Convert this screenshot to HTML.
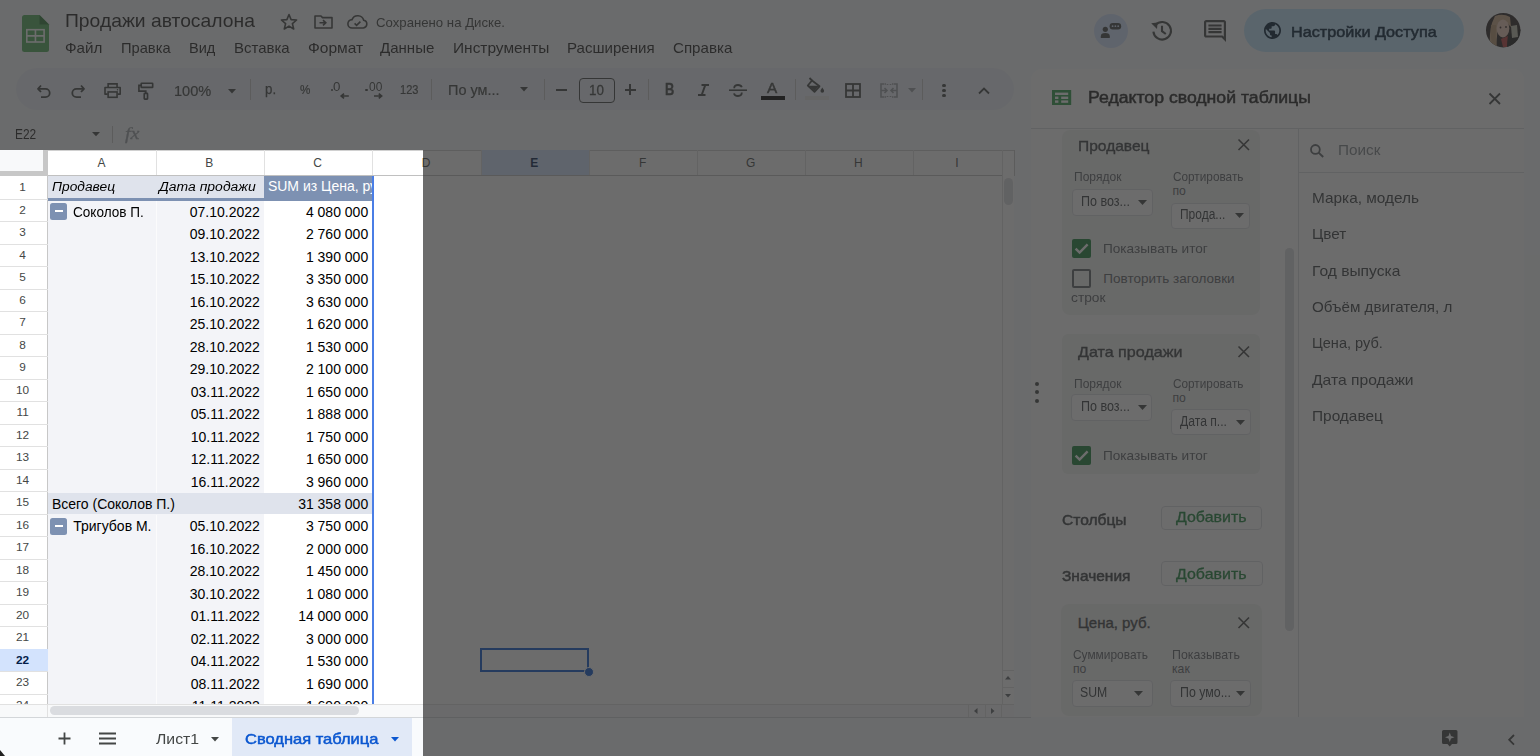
<!DOCTYPE html>
<html><head><meta charset="utf-8"><title>Sheets</title>
<style>
*{margin:0;padding:0;box-sizing:border-box}
html,body{width:1540px;height:756px;overflow:hidden;background:#f9fbfd;font-family:"Liberation Sans",sans-serif;position:relative}
.a{position:absolute}
.t{position:absolute;white-space:nowrap;line-height:normal;transform-origin:0 0}
svg.a{overflow:visible}
</style></head><body>
<svg class="a" style="left:22px;top:15px;" width="27" height="37" viewBox="0 0 27 37"><path d="M0 2.5 Q0 0 2.5 0 H17.5 L27 9.5 V34.5 Q27 37 24.5 37 H2.5 Q0 37 0 34.5 Z" fill="#4fae5c"/>
<path d="M17.5 0 V9.5 H27 Z" fill="#2f7a3a"/>
<rect x="4.8" y="14.7" width="17.3" height="12.3" fill="none" stroke="#fff" stroke-width="1.6"/>
<path d="M4.8 20.85 H22.1 M13.45 14.7 V27" stroke="#fff" stroke-width="1.6"/></svg>
<div class="t" style="left:65.00px;top:10.73px;font-size:18.2px;color:#1f1f1f;transform:scaleX(1.0611);">Продажи автосалона</div>
<svg class="a" style="left:280px;top:13px;" width="18" height="17" viewBox="0 0 18 17"><path d="M9 1.5 L11.1 6.6 L16.6 7 L12.4 10.6 L13.7 16 L9 13.1 L4.3 16 L5.6 10.6 L1.4 7 L6.9 6.6 Z" fill="none" stroke="#444746" stroke-width="1.6" stroke-linejoin="round"/></svg>
<svg class="a" style="left:314px;top:15px;" width="19" height="14" viewBox="0 0 19 14"><path d="M1 1 H7 L8.5 2.6 H18 V13 H1 Z" fill="none" stroke="#444746" stroke-width="1.6" stroke-linejoin="round"/><path d="M5.5 7.8 H11.5 M9 5.2 L11.8 7.8 L9 10.4" fill="none" stroke="#444746" stroke-width="1.6"/></svg>
<svg class="a" style="left:347px;top:15px;" width="21" height="14" viewBox="0 0 21 14"><path d="M5.2 13 H16.3 A3.9 3.9 0 0 0 16.7 5.3 A6.2 6.2 0 0 0 5 4.6 A4.2 4.2 0 0 0 5.2 13 Z" fill="none" stroke="#444746" stroke-width="1.6"/><path d="M7.6 8.4 L9.6 10.3 L13.4 6.6" fill="none" stroke="#444746" stroke-width="1.6"/></svg>
<div class="t" style="left:376.30px;top:15.86px;font-size:12.2px;color:#444746;transform:scaleX(1.0821);">Сохранено на Диске.</div>
<div class="t" style="left:65.40px;top:40.22px;font-size:13.9px;color:#1f1f1f;transform:scaleX(1.0944);">Файл</div>
<div class="t" style="left:121.40px;top:40.22px;font-size:13.9px;color:#1f1f1f;transform:scaleX(1.0564);">Правка</div>
<div class="t" style="left:189.30px;top:40.22px;font-size:13.9px;color:#1f1f1f;transform:scaleX(1.0458);">Вид</div>
<div class="t" style="left:233.80px;top:40.22px;font-size:13.9px;color:#1f1f1f;transform:scaleX(1.0781);">Вставка</div>
<div class="t" style="left:307.70px;top:40.22px;font-size:13.9px;color:#1f1f1f;transform:scaleX(1.1179);">Формат</div>
<div class="t" style="left:380.40px;top:40.22px;font-size:13.9px;color:#1f1f1f;transform:scaleX(1.0833);">Данные</div>
<div class="t" style="left:452.70px;top:40.22px;font-size:13.9px;color:#1f1f1f;transform:scaleX(1.1122);">Инструменты</div>
<div class="t" style="left:567.00px;top:40.22px;font-size:13.9px;color:#1f1f1f;transform:scaleX(1.0849);">Расширения</div>
<div class="t" style="left:672.80px;top:40.22px;font-size:13.9px;color:#1f1f1f;transform:scaleX(1.0893);">Справка</div>
<div class="a" style="left:1094px;top:13.5px;width:34px;height:34px;border-radius:50%;background:#d3e3fd"></div>
<svg class="a" style="left:1100px;top:22px;" width="23" height="17" viewBox="0 0 23 17"><circle cx="5.3" cy="7.3" r="2.6" fill="#444746"/><path d="M0.8 16 V14.2 Q0.8 10.9 5.3 10.9 Q9.8 10.9 9.8 14.2 V16 Z" fill="#444746"/><rect x="9.6" y="1" width="11.6" height="6.4" rx="3.2" fill="#444746"/><circle cx="12.6" cy="4.2" r="0.9" fill="#d3e3fd"/><circle cx="15.4" cy="4.2" r="0.9" fill="#d3e3fd"/><circle cx="18.2" cy="4.2" r="0.9" fill="#d3e3fd"/></svg>
<svg class="a" style="left:1150px;top:19px;" width="23" height="23" viewBox="0 0 23 23"><path d="M3.4 12.6 A8.8 8.8 0 1 0 5.6 5.9" fill="none" stroke="#444746" stroke-width="2.1"/><path d="M1.2 4.3 L7.6 3.6 L7 10 Z" fill="#444746"/><path d="M12 6.8 V12.2 L15.8 15" fill="none" stroke="#444746" stroke-width="2.1"/></svg>
<svg class="a" style="left:1203.5px;top:19.5px;" width="22" height="22" viewBox="2 2 20 20"><path d="M21.99 4c0-1.1-.89-2-1.99-2H4c-1.1 0-2 .9-2 2v12c0 1.1.9 2 2 2h14l4 4-.01-18zM20 4v13.17L18.83 16H4V4h16zM6 12h12v2H6zm0-3h12v2H6zm0-3h12v2H6z" fill="#444746"/></svg>
<div class="a" style="left:1244px;top:9px;width:220px;height:43px;border-radius:22px;background:#c2e7ff"></div>
<svg class="a" style="left:1263.6px;top:22px;" width="17" height="17" viewBox="2 2 20 20"><path d="M12 2C6.48 2 2 6.48 2 12s4.48 10 10 10 10-4.48 10-10S17.52 2 12 2zm-1 17.93c-3.95-.49-7-3.85-7-7.93 0-.62.08-1.21.21-1.79L9 15v1c0 1.1.9 2 2 2v1.93zm6.9-2.54c-.26-.81-1-1.39-1.9-1.39h-1v-3c0-.55-.45-1-1-1H8v-2h2c.55 0 1-.45 1-1V7h2c1.1 0 2-.9 2-2v-.41c2.93 1.19 5 4.06 5 7.41 0 2.08-.8 3.97-2.1 5.39z" fill="#001d35"/></svg>
<div class="t" style="left:1290.60px;top:22.84px;font-size:15.2px;color:#001d35;-webkit-text-stroke:0.55px #001d35;transform:scaleX(1.0666);">Настройки Доступа</div>
<svg class="a" style="left:1485.6px;top:13px;" width="34.4" height="34.4" viewBox="0 0 34.4 34.4"><defs><clipPath id="av"><circle cx="17.2" cy="17.2" r="17.2"/></clipPath><filter id="bl"><feGaussianBlur stdDeviation="0.7"/></filter></defs><g clip-path="url(#av)"><rect width="35" height="35" fill="#2a2424"/><g filter="url(#bl)"><path d="M9 3 Q17 0 24 4 L25 14 L20 9 Q15 7 12 12 L10 35 L4 35 Q3 20 6 10 Z" fill="#c9a684"/><path d="M5 12 Q4 25 7 35 L11 35 Q9 24 10 12 Z" fill="#b8956e"/><ellipse cx="17" cy="15.5" rx="6.3" ry="9" fill="#e9c8b6"/><path d="M15 26 L22 23 L21 34 L17 34 Z" fill="#b83a3a"/><path d="M22 22 L35 16 L35 35 L21 35 Z" fill="#1e1a1a"/><path d="M25 13 L31 12 L32 24 L26 25 Z" fill="#bfbfae"/><circle cx="14.5" cy="14.5" r="0.9" fill="#3a2a2a"/><circle cx="20" cy="14" r="0.9" fill="#3a2a2a"/></g></g></svg>
<div class="a" style="left:16px;top:68px;width:998px;height:42px;border-radius:21px;background:#edf2fa"></div>
<svg class="a" style="left:37px;top:84px;" width="14" height="14" viewBox="0 0 14 14"><path d="M4 1.5 L1 4.8 L4 8" fill="none" stroke="#444746" stroke-width="1.8" stroke-linejoin="round"/><path d="M1.5 4.8 H8.5 A4.2 4.2 0 0 1 8.5 13.2 H4" fill="none" stroke="#444746" stroke-width="1.8"/></svg>
<svg class="a" style="left:71px;top:84px;" width="14" height="14" viewBox="0 0 14 14"><path d="M10 1.5 L13 4.8 L10 8" fill="none" stroke="#444746" stroke-width="1.8" stroke-linejoin="round"/><path d="M12.5 4.8 H5.5 A4.2 4.2 0 0 0 5.5 13.2 H10" fill="none" stroke="#444746" stroke-width="1.8"/></svg>
<svg class="a" style="left:103.9px;top:83px;" width="17.2" height="15.2" viewBox="0 0 19 17"><path d="M4.5 5 V1 H14.5 V5" fill="none" stroke="#444746" stroke-width="1.8"/><path d="M4 12.5 H1 V5 H18 V12.5 H15" fill="none" stroke="#444746" stroke-width="1.8" stroke-linejoin="round"/><rect x="4.5" y="10" width="10" height="6" fill="none" stroke="#444746" stroke-width="1.8"/><circle cx="15" cy="7.6" r="0.8" fill="#444746"/></svg>
<svg class="a" style="left:137.8px;top:81.8px;" width="15.6" height="18.2" viewBox="0 0 17 19"><rect x="3.5" y="1" width="12.5" height="4.5" rx="0.5" fill="none" stroke="#444746" stroke-width="1.8"/><path d="M3.5 3.2 H1 V9.5 H8.5 V12" fill="none" stroke="#444746" stroke-width="1.8"/><rect x="6.8" y="12" width="3.6" height="6.3" rx="0.6" fill="none" stroke="#444746" stroke-width="1.8"/></svg>
<div class="t" style="left:174.00px;top:83.28px;font-size:14.5px;color:#444746;-webkit-text-stroke:0.2px #444746;transform:scaleX(1.0058);">100%</div>
<svg class="a" style="left:227.5px;top:89.25px;" width="8" height="4.5" viewBox="0 0 8 4.5"><path d="M0 0 H8 L4.0 4.5 Z" fill="#444746"/></svg>
<div class="a" style="left:249.8px;top:79px;width:1px;height:21px;background:#c7c7c7;"></div>
<div class="t" style="left:265.20px;top:80.98px;font-size:14.5px;color:#444746;-webkit-text-stroke:0.25px #444746;transform:scaleX(0.9179);">р.</div>
<div class="t" style="left:299.80px;top:81.96px;font-size:13.3px;color:#444746;-webkit-text-stroke:0.2px #444746;transform:scaleX(0.8795);">%</div>
<div class="a" style="left:330.8px;top:88.8px;width:2.6px;height:2.6px;background:#444746;border-radius:50%;"></div>
<div class="t" style="left:333.40px;top:80.44px;font-size:12px;color:#444746;transform:scaleX(1.1088);">0</div>
<svg class="a" style="left:339.5px;top:93px;" width="9" height="6" viewBox="0 0 9 6"><path d="M8.8 3 H1.5 M4 0.6 L1.2 3 L4 5.4" fill="none" stroke="#444746" stroke-width="1.7"/></svg>
<div class="a" style="left:365px;top:88.8px;width:2.6px;height:2.6px;background:#444746;border-radius:50%;"></div>
<div class="t" style="left:368.80px;top:80.44px;font-size:12px;color:#444746;transform:scaleX(0.9964);">00</div>
<svg class="a" style="left:373.6px;top:93px;" width="9" height="6" viewBox="0 0 9 6"><path d="M0 3 H7.3 M4.8 0.6 L7.6 3 L4.8 5.4" fill="none" stroke="#444746" stroke-width="1.7"/></svg>
<div class="t" style="left:399.60px;top:82.88px;font-size:12.4px;color:#444746;-webkit-text-stroke:0.2px #444746;transform:scaleX(0.8893);">123</div>
<div class="a" style="left:431.1px;top:79px;width:1px;height:21px;background:#c7c7c7;"></div>
<div class="t" style="left:448.30px;top:81.12px;font-size:15px;color:#444746;-webkit-text-stroke:0.2px #444746;transform:scaleX(0.9638);">По ум...</div>
<svg class="a" style="left:519.7px;top:87.05px;" width="8" height="4.5" viewBox="0 0 8 4.5"><path d="M0 0 H8 L4.0 4.5 Z" fill="#444746"/></svg>
<div class="a" style="left:544.1px;top:79px;width:1px;height:21px;background:#c7c7c7;"></div>
<div class="a" style="left:556.2px;top:89px;width:10.6px;height:1.8px;background:#444746;"></div>
<div class="a" style="left:578.5px;top:77.5px;width:36px;height:25px;border:1px solid #444746;border-radius:4px"></div>
<div class="t" style="left:588.70px;top:81.91px;font-size:14.8px;color:#444746;-webkit-text-stroke:0.3px #444746;transform:scaleX(0.9051);">10</div>
<div class="a" style="left:624.7px;top:89px;width:11.1px;height:1.8px;background:#444746;"></div>
<div class="a" style="left:629.35px;top:84.4px;width:1.8px;height:11px;background:#444746;"></div>
<div class="a" style="left:647.9px;top:79px;width:1px;height:21px;background:#c7c7c7;"></div>
<div class="t" style="left:664.70px;top:81.32px;font-size:16px;color:#444746;font-weight:bold;-webkit-text-stroke:0.3px #444746;transform:scaleX(0.8048);">B</div>
<svg class="a" style="left:697px;top:84px;" width="13" height="12" viewBox="0 0 13 12"><path d="M4.5 1 H12 M1 11 H8.5 M8.3 1 L4.7 11" fill="none" stroke="#444746" stroke-width="2"/></svg>
<svg class="a" style="left:729px;top:84px;" width="18" height="13" viewBox="0 0 18 13"><path d="M0 6.2 H18" stroke="#444746" stroke-width="1.6"/><path d="M5.2 4.2 Q5.2 1 9 1 Q12 1 12.8 3.2 M12.8 8.6 Q12.8 12 9 12 Q5.5 12 5 9.3" fill="none" stroke="#444746" stroke-width="1.8"/></svg>
<div class="t" style="left:767.40px;top:80.13px;font-size:14px;color:#444746;-webkit-text-stroke:0.45px #444746;transform:scaleX(1.0923);">A</div>
<div class="a" style="left:761.1px;top:95.8px;width:24.4px;height:4px;background:#000;"></div>
<div class="a" style="left:794.9px;top:79px;width:1px;height:21px;background:#c7c7c7;"></div>
<svg class="a" style="left:806px;top:77px;" width="20" height="17" viewBox="0 0 20 17"><path d="M3.5 1 L6 3.5" stroke="#444746" stroke-width="1.8"/><path d="M6 3.5 L13.5 9.3 L8.5 14.8 L1.8 8.5 Z" fill="none" stroke="#444746" stroke-width="1.8" stroke-linejoin="round"/><path d="M2.8 8.8 H13 L8.5 14 Z" fill="#444746"/><path d="M16.3 10.5 Q14.5 13 14.5 14 A1.8 1.8 0 0 0 18.1 14 Q18.1 13 16.3 10.5 Z" fill="#444746"/></svg>
<div class="a" style="left:805.2px;top:95.8px;width:24.3px;height:4.3px;background:#e8e8e8;"></div>
<svg class="a" style="left:845px;top:83px;" width="16" height="15" viewBox="0 0 16 15"><rect x="1" y="1" width="14" height="13" fill="none" stroke="#444746" stroke-width="1.8"/><path d="M8 1 V14 M1 7.5 H15" stroke="#444746" stroke-width="1.8"/></svg>
<svg class="a" style="left:880px;top:83px;" width="18" height="15" viewBox="0 0 18 15"><path d="M4 1 H1 V14 H4 M14 1 H17 V14 H14 M4.5 1 H6 M4.5 14 H6 M12 1 H13.5 M12 14 H13.5 M7.5 1 V2 M7.5 13 V14 M10.5 1 V2 M10.5 13 V14" fill="none" stroke="#9aa0a6" stroke-width="1.6"/><path d="M1 7.5 H7 M4.5 5 L7 7.5 L4.5 10 M17 7.5 H11 M13.5 5 L11 7.5 L13.5 10" fill="none" stroke="#9aa0a6" stroke-width="1.6"/></svg>
<svg class="a" style="left:907.5px;top:87.95px;" width="8" height="4.5" viewBox="0 0 8 4.5"><path d="M0 0 H8 L4.0 4.5 Z" fill="#9aa0a6"/></svg>
<div class="a" style="left:922.0px;top:79px;width:1px;height:21px;background:#c7c7c7;"></div>
<div class="a" style="left:942.3px;top:83.8px;width:3.4px;height:3.4px;border-radius:50%;background:#444746"></div>
<div class="a" style="left:942.3px;top:88.7px;width:3.4px;height:3.4px;border-radius:50%;background:#444746"></div>
<div class="a" style="left:942.3px;top:93.6px;width:3.4px;height:3.4px;border-radius:50%;background:#444746"></div>
<svg class="a" style="left:978px;top:87px;" width="12" height="7.5" viewBox="0 0 12 7.5"><path d="M1 6.5 L6 1.5 L11 6.5" fill="none" stroke="#444746" stroke-width="1.8"/></svg>
<div class="t" style="left:14.50px;top:126.23px;font-size:14px;color:#1f1f1f;transform:scaleX(0.8510);">E22</div>
<svg class="a" style="left:91.5px;top:132.1px;" width="8" height="4.2" viewBox="0 0 8 4.2"><path d="M0 0 H8 L4.0 4.2 Z" fill="#444746"/></svg>
<div class="a" style="left:112.2px;top:126px;width:1px;height:17px;background:#c7c7c7;"></div>
<div class="t" style="left:124.8px;top:124px;font-size:16.5px;color:#9aa0a6;font-style:italic;transform:scaleX(1.22);-webkit-text-stroke:0.3px #9aa0a6;font-family:'Liberation Serif',serif">fx</div>
<div class="a" style="left:0px;top:150px;width:1014px;height:554px;background:#ffffff;"></div>
<div class="a" style="left:0px;top:150px;width:48px;height:25px;background:#f8f9fa;"></div>
<div class="a" style="left:48px;top:150px;width:966px;height:1px;background:#d0d0d0;"></div>
<div class="a" style="left:43px;top:150px;width:4.5px;height:25px;background:#c7c7c7;"></div>
<div class="a" style="left:0px;top:171px;width:47.5px;height:4.5px;background:#c7c7c7;"></div>
<div class="a" style="left:47px;top:150px;width:1px;height:554px;background:#c7c7c7;"></div>
<div class="a" style="left:48px;top:175px;width:966px;height:1px;background:#c0c0c0;"></div>
<div class="a" style="left:481px;top:150px;width:107.5px;height:25px;background:#d3e3fd;"></div>
<div class="a" style="left:155.5px;top:150px;width:1px;height:25px;background:#e1e1e1;"></div>
<div class="a" style="left:263.5px;top:150px;width:1px;height:25px;background:#e1e1e1;"></div>
<div class="a" style="left:372px;top:150px;width:1px;height:25px;background:#e1e1e1;"></div>
<div class="a" style="left:480.5px;top:150px;width:1px;height:25px;background:#e1e1e1;"></div>
<div class="a" style="left:588.5px;top:150px;width:1px;height:25px;background:#e1e1e1;"></div>
<div class="a" style="left:697px;top:150px;width:1px;height:25px;background:#e1e1e1;"></div>
<div class="a" style="left:804.5px;top:150px;width:1px;height:25px;background:#e1e1e1;"></div>
<div class="a" style="left:912.5px;top:150px;width:1px;height:25px;background:#e1e1e1;"></div>
<div class="a" style="left:1001.5px;top:150px;width:1px;height:25px;background:#e1e1e1;"></div>
<div class="t" style="left:97.55px;top:155.64px;font-size:12px;color:#444746;">A</div>
<div class="t" style="left:205.30px;top:155.64px;font-size:12px;color:#444746;">B</div>
<div class="t" style="left:313.22px;top:155.64px;font-size:12px;color:#444746;">C</div>
<div class="t" style="left:421.72px;top:155.64px;font-size:12px;color:#444746;">D</div>
<div class="t" style="left:530.30px;top:155.64px;font-size:12px;color:#041e49;font-weight:bold;">E</div>
<div class="t" style="left:638.88px;top:155.64px;font-size:12px;color:#444746;">F</div>
<div class="t" style="left:745.88px;top:155.64px;font-size:12px;color:#444746;">G</div>
<div class="t" style="left:853.97px;top:155.64px;font-size:12px;color:#444746;">H</div>
<div class="t" style="left:955.13px;top:155.64px;font-size:12px;color:#444746;">I</div>
<div class="a" style="left:0px;top:198.9px;width:47.5px;height:1px;background:#e1e1e1;"></div>
<div class="t" style="left:19.32px;top:179.62px;font-size:11.8px;color:#444746;">1</div>
<div class="a" style="left:0px;top:221.39000000000001px;width:47.5px;height:1px;background:#e1e1e1;"></div>
<div class="t" style="left:19.32px;top:202.82px;font-size:11.8px;color:#444746;">2</div>
<div class="a" style="left:0px;top:243.88000000000002px;width:47.5px;height:1px;background:#e1e1e1;"></div>
<div class="t" style="left:19.32px;top:225.31px;font-size:11.8px;color:#444746;">3</div>
<div class="a" style="left:0px;top:266.37px;width:47.5px;height:1px;background:#e1e1e1;"></div>
<div class="t" style="left:19.32px;top:247.80px;font-size:11.8px;color:#444746;">4</div>
<div class="a" style="left:0px;top:288.86px;width:47.5px;height:1px;background:#e1e1e1;"></div>
<div class="t" style="left:19.32px;top:270.29px;font-size:11.8px;color:#444746;">5</div>
<div class="a" style="left:0px;top:311.35px;width:47.5px;height:1px;background:#e1e1e1;"></div>
<div class="t" style="left:19.32px;top:292.78px;font-size:11.8px;color:#444746;">6</div>
<div class="a" style="left:0px;top:333.84000000000003px;width:47.5px;height:1px;background:#e1e1e1;"></div>
<div class="t" style="left:19.32px;top:315.27px;font-size:11.8px;color:#444746;">7</div>
<div class="a" style="left:0px;top:356.33000000000004px;width:47.5px;height:1px;background:#e1e1e1;"></div>
<div class="t" style="left:19.32px;top:337.76px;font-size:11.8px;color:#444746;">8</div>
<div class="a" style="left:0px;top:378.82px;width:47.5px;height:1px;background:#e1e1e1;"></div>
<div class="t" style="left:19.32px;top:360.25px;font-size:11.8px;color:#444746;">9</div>
<div class="a" style="left:0px;top:401.31px;width:47.5px;height:1px;background:#e1e1e1;"></div>
<div class="t" style="left:16.04px;top:382.74px;font-size:11.8px;color:#444746;">10</div>
<div class="a" style="left:0px;top:423.8px;width:47.5px;height:1px;background:#e1e1e1;"></div>
<div class="t" style="left:16.48px;top:405.23px;font-size:11.8px;color:#444746;">11</div>
<div class="a" style="left:0px;top:446.28999999999996px;width:47.5px;height:1px;background:#e1e1e1;"></div>
<div class="t" style="left:16.04px;top:427.72px;font-size:11.8px;color:#444746;">12</div>
<div class="a" style="left:0px;top:468.78px;width:47.5px;height:1px;background:#e1e1e1;"></div>
<div class="t" style="left:16.04px;top:450.21px;font-size:11.8px;color:#444746;">13</div>
<div class="a" style="left:0px;top:491.27px;width:47.5px;height:1px;background:#e1e1e1;"></div>
<div class="t" style="left:16.04px;top:472.70px;font-size:11.8px;color:#444746;">14</div>
<div class="a" style="left:0px;top:513.76px;width:47.5px;height:1px;background:#e1e1e1;"></div>
<div class="t" style="left:16.04px;top:495.19px;font-size:11.8px;color:#444746;">15</div>
<div class="a" style="left:0px;top:536.25px;width:47.5px;height:1px;background:#e1e1e1;"></div>
<div class="t" style="left:16.04px;top:517.68px;font-size:11.8px;color:#444746;">16</div>
<div class="a" style="left:0px;top:558.74px;width:47.5px;height:1px;background:#e1e1e1;"></div>
<div class="t" style="left:16.04px;top:540.17px;font-size:11.8px;color:#444746;">17</div>
<div class="a" style="left:0px;top:581.23px;width:47.5px;height:1px;background:#e1e1e1;"></div>
<div class="t" style="left:16.04px;top:562.66px;font-size:11.8px;color:#444746;">18</div>
<div class="a" style="left:0px;top:603.72px;width:47.5px;height:1px;background:#e1e1e1;"></div>
<div class="t" style="left:16.04px;top:585.15px;font-size:11.8px;color:#444746;">19</div>
<div class="a" style="left:0px;top:626.21px;width:47.5px;height:1px;background:#e1e1e1;"></div>
<div class="t" style="left:16.04px;top:607.64px;font-size:11.8px;color:#444746;">20</div>
<div class="a" style="left:0px;top:648.6999999999999px;width:47.5px;height:1px;background:#e1e1e1;"></div>
<div class="t" style="left:16.04px;top:630.13px;font-size:11.8px;color:#444746;">21</div>
<div class="a" style="left:0px;top:649.1999999999999px;width:47.5px;height:22.49px;background:#d3e3fd;"></div>
<div class="a" style="left:0px;top:671.1899999999999px;width:47.5px;height:1px;background:#e1e1e1;"></div>
<div class="t" style="left:16.04px;top:652.62px;font-size:11.8px;color:#041e49;font-weight:bold;">22</div>
<div class="a" style="left:0px;top:693.68px;width:47.5px;height:1px;background:#e1e1e1;"></div>
<div class="t" style="left:16.04px;top:675.11px;font-size:11.8px;color:#444746;">23</div>
<div class="a" style="left:0px;top:716.17px;width:47.5px;height:1px;background:#e1e1e1;"></div>
<div class="t" style="left:16.04px;top:697.60px;font-size:11.8px;color:#444746;">24</div>
<div class="a" style="left:48px;top:176px;width:215.5px;height:21.5px;background:#dfe3ec;"></div>
<div class="a" style="left:263.5px;top:176px;width:108.5px;height:24.5px;background:#7d91b2;"></div>
<div class="a" style="left:48px;top:197.5px;width:215.5px;height:3px;background:#7d91b2;"></div>
<div class="a" style="left:48px;top:200.5px;width:215.5px;height:503.5px;background:#f3f4f8;"></div>
<div class="a" style="left:263.5px;top:200.5px;width:108.5px;height:503.5px;background:#ffffff;"></div>
<div class="a" style="left:155.5px;top:200.5px;width:1px;height:292px;background:#fbfbfc;"></div>
<div class="a" style="left:155.5px;top:514.8px;width:1px;height:189px;background:#fbfbfc;"></div>
<div class="t" style="left:51.90px;top:178.60px;font-size:13.7px;color:#000;font-style:italic;transform:scaleX(1.0070);">Продавец</div>
<div class="t" style="left:159.10px;top:178.60px;font-size:13.7px;color:#000;font-style:italic;transform:scaleX(1.0193);">Дата продажи</div>
<div class="a" style="left:263.5px;top:176px;width:108.5px;height:24px;overflow:hidden">
<div class="t" style="left:4.40px;top:2.13px;font-size:14px;color:#ffffff;">SUM из Цена, руб.</div>
</div>
<div class="a" style="left:48px;top:492.57px;width:324px;height:21.5px;background:#dfe3ec;"></div>
<div class="a" style="left:0;top:0;width:1540px;height:704px;overflow:hidden">
<div class="t" style="left:189.73px;top:203.63px;font-size:14px;color:#000;">07.10.2022</div>
<div class="t" style="left:305.92px;top:203.63px;font-size:14px;color:#000;">4 080 000</div>
<div class="t" style="left:189.73px;top:226.12px;font-size:14px;color:#000;">09.10.2022</div>
<div class="t" style="left:305.92px;top:226.12px;font-size:14px;color:#000;">2 760 000</div>
<div class="t" style="left:189.73px;top:248.61px;font-size:14px;color:#000;">13.10.2022</div>
<div class="t" style="left:305.92px;top:248.61px;font-size:14px;color:#000;">1 390 000</div>
<div class="t" style="left:189.73px;top:271.10px;font-size:14px;color:#000;">15.10.2022</div>
<div class="t" style="left:305.92px;top:271.10px;font-size:14px;color:#000;">3 350 000</div>
<div class="t" style="left:189.73px;top:293.59px;font-size:14px;color:#000;">16.10.2022</div>
<div class="t" style="left:305.92px;top:293.59px;font-size:14px;color:#000;">3 630 000</div>
<div class="t" style="left:189.73px;top:316.08px;font-size:14px;color:#000;">25.10.2022</div>
<div class="t" style="left:305.92px;top:316.08px;font-size:14px;color:#000;">1 620 000</div>
<div class="t" style="left:189.73px;top:338.57px;font-size:14px;color:#000;">28.10.2022</div>
<div class="t" style="left:305.92px;top:338.57px;font-size:14px;color:#000;">1 530 000</div>
<div class="t" style="left:189.73px;top:361.06px;font-size:14px;color:#000;">29.10.2022</div>
<div class="t" style="left:305.92px;top:361.06px;font-size:14px;color:#000;">2 100 000</div>
<div class="t" style="left:190.77px;top:383.55px;font-size:14px;color:#000;">03.11.2022</div>
<div class="t" style="left:305.92px;top:383.55px;font-size:14px;color:#000;">1 650 000</div>
<div class="t" style="left:190.77px;top:406.04px;font-size:14px;color:#000;">05.11.2022</div>
<div class="t" style="left:305.92px;top:406.04px;font-size:14px;color:#000;">1 888 000</div>
<div class="t" style="left:190.77px;top:428.53px;font-size:14px;color:#000;">10.11.2022</div>
<div class="t" style="left:305.92px;top:428.53px;font-size:14px;color:#000;">1 750 000</div>
<div class="t" style="left:190.77px;top:451.02px;font-size:14px;color:#000;">12.11.2022</div>
<div class="t" style="left:305.92px;top:451.02px;font-size:14px;color:#000;">1 650 000</div>
<div class="t" style="left:190.77px;top:473.51px;font-size:14px;color:#000;">16.11.2022</div>
<div class="t" style="left:305.92px;top:473.51px;font-size:14px;color:#000;">3 960 000</div>
<div class="a" style="left:50.3px;top:202.90px;width:16.8px;height:16.8px;border-radius:2.5px;background:#7d91b2"></div>
<div class="a" style="left:54.7px;top:209.7px;width:8.5px;height:2.6px;background:#fff;"></div>
<div class="t" style="left:73.30px;top:203.63px;font-size:14px;color:#000;transform:scaleX(0.9692);">Соколов П.</div>
<div class="t" style="left:51.90px;top:496.00px;font-size:14px;color:#000;">Всего (Соколов П.)</div>
<div class="t" style="left:298.13px;top:496.00px;font-size:14px;color:#000;">31 358 000</div>
<div class="t" style="left:189.73px;top:518.49px;font-size:14px;color:#000;">05.10.2022</div>
<div class="t" style="left:305.92px;top:518.49px;font-size:14px;color:#000;">3 750 000</div>
<div class="t" style="left:189.73px;top:540.98px;font-size:14px;color:#000;">16.10.2022</div>
<div class="t" style="left:305.92px;top:540.98px;font-size:14px;color:#000;">2 000 000</div>
<div class="t" style="left:189.73px;top:563.47px;font-size:14px;color:#000;">28.10.2022</div>
<div class="t" style="left:305.92px;top:563.47px;font-size:14px;color:#000;">1 450 000</div>
<div class="t" style="left:189.73px;top:585.96px;font-size:14px;color:#000;">30.10.2022</div>
<div class="t" style="left:305.92px;top:585.96px;font-size:14px;color:#000;">1 080 000</div>
<div class="t" style="left:190.77px;top:608.45px;font-size:14px;color:#000;">01.11.2022</div>
<div class="t" style="left:298.13px;top:608.45px;font-size:14px;color:#000;">14 000 000</div>
<div class="t" style="left:190.77px;top:630.94px;font-size:14px;color:#000;">02.11.2022</div>
<div class="t" style="left:305.92px;top:630.94px;font-size:14px;color:#000;">3 000 000</div>
<div class="t" style="left:190.77px;top:653.43px;font-size:14px;color:#000;">04.11.2022</div>
<div class="t" style="left:305.92px;top:653.43px;font-size:14px;color:#000;">1 530 000</div>
<div class="t" style="left:190.77px;top:675.92px;font-size:14px;color:#000;">08.11.2022</div>
<div class="t" style="left:305.92px;top:675.92px;font-size:14px;color:#000;">1 690 000</div>
<div class="t" style="left:191.81px;top:698.41px;font-size:14px;color:#000;">11.11.2022</div>
<div class="t" style="left:305.92px;top:698.41px;font-size:14px;color:#000;">1 690 000</div>
<div class="a" style="left:50.3px;top:517.76px;width:16.8px;height:16.8px;border-radius:2.5px;background:#7d91b2"></div>
<div class="a" style="left:54.7px;top:524.56px;width:8.5px;height:2.6px;background:#fff;"></div>
<div class="t" style="left:73.20px;top:518.49px;font-size:14px;color:#000;">Тригубов М.</div>
</div>
<div class="a" style="left:371.8px;top:176px;width:2.2px;height:528px;background:#4a7ee6;"></div>
<div class="a" style="left:480.3px;top:648.20px;width:108.5px;height:23.5px;border:2px solid #0b57d0"></div>
<div class="a" style="left:583.8px;top:666.80px;width:10.4px;height:10.4px;border-radius:50%;background:#0b57d0;border:1.2px solid #fff"></div>
<div class="a" style="left:1001.5px;top:175px;width:12.5px;height:529px;background:#ffffff;"></div>
<div class="a" style="left:1001.5px;top:175px;width:1px;height:529px;background:#e1e1e1;"></div>
<div class="a" style="left:1003.9px;top:177.7px;width:8.9px;height:27.1px;border-radius:4.5px;background:#dadce0"></div>
<div class="a" style="left:1001.5px;top:670px;width:12.5px;height:0.8px;background:#e1e1e1;"></div>
<div class="a" style="left:1001.5px;top:686.7px;width:12.5px;height:0.8px;background:#e1e1e1;"></div>
<svg class="a" style="left:1005.3px;top:676px;" width="6" height="3.5" viewBox="0 0 6 3.5"><path d="M0 3.5 H6 L3 0 Z" fill="#5f6368"/></svg>
<svg class="a" style="left:1005.3px;top:693.8px;" width="6" height="3.5" viewBox="0 0 6 3.5"><path d="M0 0 H6 L3 3.5 Z" fill="#5f6368"/></svg>
<div class="a" style="left:0px;top:704px;width:1014px;height:13px;background:#f8f9fa;"></div>
<div class="a" style="left:0px;top:703.5px;width:1014px;height:1px;background:#e1e1e1;"></div>
<div class="a" style="left:47px;top:704px;width:1px;height:13px;background:#e1e1e1;"></div>
<div class="a" style="left:50px;top:705.7px;width:309px;height:9.8px;border-radius:5px;background:#dadce0"></div>
<div class="a" style="left:967.7px;top:704px;width:0.8px;height:13px;background:#e1e1e1;"></div>
<div class="a" style="left:984.5px;top:704px;width:0.8px;height:13px;background:#e1e1e1;"></div>
<div class="a" style="left:1001px;top:704px;width:0.8px;height:13px;background:#e1e1e1;"></div>
<svg class="a" style="left:973.6px;top:707.5px;" width="3.5" height="6" viewBox="0 0 3.5 6"><path d="M3.5 0 V6 L0 3 Z" fill="#5f6368"/></svg>
<svg class="a" style="left:991.3px;top:707.5px;" width="3.5" height="6" viewBox="0 0 3.5 6"><path d="M0 0 V6 L3.5 3 Z" fill="#5f6368"/></svg>
<div class="a" style="left:0px;top:717px;width:1031px;height:39px;background:#f9fbfd;"></div>
<div class="a" style="left:0px;top:716.5px;width:1540px;height:1px;background:#d3d6d9;"></div>
<svg class="a" style="left:58px;top:732px;" width="13" height="13" viewBox="0 0 13 13"><path d="M6.5 0.5 V12.5 M0.5 6.5 H12.5" stroke="#444746" stroke-width="1.8"/></svg>
<svg class="a" style="left:99px;top:732px;" width="17" height="13" viewBox="0 0 17 13"><path d="M0 1.5 H17 M0 6.5 H17 M0 11.5 H17" stroke="#444746" stroke-width="1.8"/></svg>
<div class="t" style="left:155.80px;top:731.38px;font-size:14.5px;color:#444746;transform:scaleX(1.0892);">Лист1</div>
<svg class="a" style="left:211.3px;top:737.25px;" width="8" height="4.5" viewBox="0 0 8 4.5"><path d="M0 0 H8 L4.0 4.5 Z" fill="#444746"/></svg>
<div class="a" style="left:232.3px;top:718px;width:180px;height:38px;background:#e1e9f7;"></div>
<div class="t" style="left:245.00px;top:731.11px;font-size:14.8px;color:#0b57d0;-webkit-text-stroke:0.5px #0b57d0;transform:scaleX(1.1142);">Сводная таблица</div>
<svg class="a" style="left:391.3px;top:737.25px;" width="8" height="4.5" viewBox="0 0 8 4.5"><path d="M0 0 H8 L4.0 4.5 Z" fill="#0b57d0"/></svg>
<div class="a" style="left:0px;top:748px;width:5px;height:8px;background:transparent;"></div>
<svg class="a" style="left:0px;top:750px;" width="5" height="6" viewBox="0 0 5 6"><path d="M0 0 L5 6 H0 Z" fill="#202020"/></svg>
<div class="a" style="left:1031px;top:68.5px;width:493px;height:648.5px;background:#ffffff;border-radius:11px 11px 0 0"></div>
<div class="a" style="left:1013.5px;top:150px;width:1px;height:25.5px;background:#c7c7c7;"></div>
<div class="a" style="left:1034.7px;top:381.9px;width:4px;height:4px;border-radius:50%;background:#444746"></div>
<div class="a" style="left:1034.7px;top:390.2px;width:4px;height:4px;border-radius:50%;background:#444746"></div>
<div class="a" style="left:1034.7px;top:398.6px;width:4px;height:4px;border-radius:50%;background:#444746"></div>
<svg class="a" style="left:1051.7px;top:90.4px;" width="19.2" height="15" viewBox="0 0 19.2 15"><rect x="0" y="0" width="19.2" height="15" fill="#2e9d4a"/><rect x="3" y="2.6" width="13.2" height="2.4" fill="#fff"/><rect x="3" y="6.6" width="3.4" height="2.4" fill="#fff"/><rect x="9.2" y="6.6" width="7" height="2.4" fill="#fff"/><rect x="3" y="10.4" width="3.4" height="2.4" fill="#fff"/><rect x="9.2" y="10.4" width="7" height="2.4" fill="#fff"/></svg>
<div class="t" style="left:1088.20px;top:89.48px;font-size:15.6px;color:#1f1f1f;-webkit-text-stroke:0.5px #1f1f1f;transform:scaleX(1.1318);">Редактор сводной таблицы</div>
<svg class="a" style="left:1488.75px;top:93.45px;" width="11.5" height="11.5" viewBox="0 0 11.5 11.5"><path d="M0.5 0.5 L11.0 11.0 M11.0 0.5 L0.5 11.0" stroke="#444746" stroke-width="1.8"/></svg>
<div class="a" style="left:1031px;top:128.2px;width:493px;height:1px;background:#dadce0;"></div>
<div class="a" style="left:1297.5px;top:128.7px;width:1px;height:588px;background:#dadce0;"></div>
<div class="a" style="left:1298px;top:171.7px;width:226px;height:1px;background:#dadce0;"></div>
<svg class="a" style="left:1309.6px;top:143.6px;" width="14" height="13.5" viewBox="0 0 14 13.5"><circle cx="5.4" cy="5.4" r="4.4" fill="none" stroke="#5f6368" stroke-width="1.8"/><path d="M8.6 8.6 L13.2 13" stroke="#5f6368" stroke-width="2"/></svg>
<div class="t" style="left:1338.00px;top:143.01px;font-size:13.8px;color:#80868b;transform:scaleX(1.1088);">Поиск</div>
<div class="t" style="left:1311.90px;top:189.12px;font-size:15px;color:#3c4043;transform:scaleX(1.0258);">Марка, модель</div>
<div class="t" style="left:1311.90px;top:225.45px;font-size:15px;color:#3c4043;transform:scaleX(1.0205);">Цвет</div>
<div class="t" style="left:1311.90px;top:261.79px;font-size:15px;color:#3c4043;transform:scaleX(1.0389);">Год выпуска</div>
<div class="t" style="left:1311.90px;top:298.12px;font-size:15px;color:#3c4043;transform:scaleX(1.0114);">Объём двигателя, л</div>
<div class="t" style="left:1311.90px;top:334.44px;font-size:15px;color:#3c4043;transform:scaleX(0.9699);">Цена, руб.</div>
<div class="t" style="left:1311.90px;top:370.77px;font-size:15px;color:#3c4043;transform:scaleX(1.0434);">Дата продажи</div>
<div class="t" style="left:1311.90px;top:407.10px;font-size:15px;color:#3c4043;transform:scaleX(1.0266);">Продавец</div>
<div class="a" style="left:1285.3px;top:248.3px;width:8.4px;height:382.5px;border-radius:4.2px;background:#dadce0"></div>
<div class="a" style="left:1031px;top:129px;width:266px;height:588px;overflow:hidden">
<div class="a" style="left:31.00px;top:0.60px;width:198.00px;height:185.90px;background:#f1f3f1;border-radius:8px;"></div>
<div class="t" style="left:46.50px;top:8.02px;font-size:15px;color:#3c4043;-webkit-text-stroke:0.35px #3c4043;transform:scaleX(1.0367);">Продавец</div>
<div class="t" style="left:42.50px;top:41.46px;font-size:12.2px;color:#5f6368;transform:scaleX(0.9886);">Порядок</div>
<div class="t" style="left:141.50px;top:41.46px;font-size:12.2px;color:#5f6368;transform:scaleX(0.9672);">Сортировать</div>
<div class="t" style="left:141.50px;top:54.96px;font-size:12.2px;color:#5f6368;">по</div>
<div class="a" style="left:41.00px;top:60.00px;width:80.50px;height:26.50px;background:#ffffff;border:1px solid #dadce0;border-radius:4px;box-sizing:border-box;"></div>
<div class="t" style="left:50.00px;top:63.83px;font-size:14px;color:#3c4043;transform:scaleX(0.8952);">По воз...</div>
<svg class="a" style="left:106.5px;top:70.75px;" width="9" height="5" viewBox="0 0 9 5"><path d="M0 0 H9 L4.5 5 Z" fill="#444746"/></svg>
<div class="a" style="left:139.70px;top:73.50px;width:79.70px;height:26.80px;background:#ffffff;border:1px solid #dadce0;border-radius:4px;box-sizing:border-box;"></div>
<div class="t" style="left:148.70px;top:77.33px;font-size:14px;color:#3c4043;transform:scaleX(0.8555);">Прода...</div>
<svg class="a" style="left:204.4000000000001px;top:84.4px;" width="9" height="5" viewBox="0 0 9 5"><path d="M0 0 H9 L4.5 5 Z" fill="#444746"/></svg>
<div class="a" style="left:41.20px;top:110.40px;width:19.00px;height:19.00px;background:#188038;border-radius:2px;"></div>
<svg class="a" style="left:41.200000000000045px;top:110.4px;" width="19" height="19" viewBox="0 0 19 19"><path d="M3.6 9.6 L7.6 13.6 L15.6 5.4" fill="none" stroke="#fff" stroke-width="2.4"/></svg>
<div class="t" style="left:72.30px;top:112.08px;font-size:13.5px;color:#5f6368;transform:scaleX(1.0090);">Показывать итог</div>
<div class="a" style="left:41.20px;top:140.40px;width:19.00px;height:19.00px;background:transparent;border:2px solid #5f6368;border-radius:2px;box-sizing:border-box;"></div>
<div class="t" style="left:72.30px;top:142.08px;font-size:13.5px;color:#5f6368;">Повторить заголовки</div>
<div class="t" style="left:40.40px;top:160.78px;font-size:13.5px;color:#5f6368;transform:scaleX(1.0190);">строк</div>
<div class="a" style="left:31.00px;top:204.90px;width:198.00px;height:140.30px;background:#f1f3f1;border-radius:6px;"></div>
<div class="t" style="left:46.80px;top:214.12px;font-size:15px;color:#3c4043;-webkit-text-stroke:0.35px #3c4043;transform:scaleX(1.0732);">Дата продажи</div>
<div class="t" style="left:42.50px;top:247.96px;font-size:12.2px;color:#5f6368;transform:scaleX(0.9886);">Порядок</div>
<div class="t" style="left:141.50px;top:247.96px;font-size:12.2px;color:#5f6368;transform:scaleX(0.9672);">Сортировать</div>
<div class="t" style="left:141.50px;top:261.96px;font-size:12.2px;color:#5f6368;">по</div>
<div class="a" style="left:40.40px;top:265.40px;width:81.10px;height:27.00px;background:#ffffff;border:1px solid #dadce0;border-radius:4px;box-sizing:border-box;"></div>
<div class="t" style="left:50.00px;top:269.23px;font-size:14px;color:#3c4043;transform:scaleX(0.8952);">По воз...</div>
<svg class="a" style="left:106.5px;top:276.4px;" width="9" height="5" viewBox="0 0 9 5"><path d="M0 0 H9 L4.5 5 Z" fill="#444746"/></svg>
<div class="a" style="left:140.00px;top:279.90px;width:79.50px;height:26.40px;background:#ffffff;border:1px solid #dadce0;border-radius:4px;box-sizing:border-box;"></div>
<div class="t" style="left:148.70px;top:283.73px;font-size:14px;color:#3c4043;transform:scaleX(0.8681);">Дата п...</div>
<svg class="a" style="left:204.5px;top:290.6px;" width="9" height="5" viewBox="0 0 9 5"><path d="M0 0 H9 L4.5 5 Z" fill="#444746"/></svg>
<div class="a" style="left:41.20px;top:316.80px;width:19.00px;height:19.00px;background:#188038;border-radius:2px;"></div>
<svg class="a" style="left:41.200000000000045px;top:316.8px;" width="19" height="19" viewBox="0 0 19 19"><path d="M3.6 9.6 L7.6 13.6 L15.6 5.4" fill="none" stroke="#fff" stroke-width="2.4"/></svg>
<div class="t" style="left:72.30px;top:319.08px;font-size:13.5px;color:#5f6368;transform:scaleX(1.0090);">Показывать итог</div>
<div class="t" style="left:30.70px;top:381.63px;font-size:15px;color:#3c4043;-webkit-text-stroke:0.5px #3c4043;transform:scaleX(1.0359);">Столбцы</div>
<div class="a" style="left:130.00px;top:376.60px;width:101.20px;height:24.20px;background:#ffffff;border:1px solid #dadce0;border-radius:4px;box-sizing:border-box;"></div>
<div class="t" style="left:145.00px;top:379.43px;font-size:15px;color:#188038;-webkit-text-stroke:0.3px #188038;transform:scaleX(1.0635);">Добавить</div>
<div class="t" style="left:30.50px;top:438.32px;font-size:15px;color:#3c4043;-webkit-text-stroke:0.5px #3c4043;transform:scaleX(1.0317);">Значения</div>
<div class="a" style="left:130.00px;top:431.60px;width:101.50px;height:25.00px;background:#ffffff;border:1px solid #dadce0;border-radius:4px;box-sizing:border-box;"></div>
<div class="t" style="left:145.00px;top:436.13px;font-size:15px;color:#188038;-webkit-text-stroke:0.3px #188038;transform:scaleX(1.0635);">Добавить</div>
<div class="a" style="left:29.60px;top:474.60px;width:201.30px;height:112.60px;background:#f1f3f1;border-radius:8px;"></div>
<div class="t" style="left:46.70px;top:485.13px;font-size:15px;color:#3c4043;-webkit-text-stroke:0.35px #3c4043;">Цена, руб.</div>
<div class="t" style="left:42.00px;top:518.86px;font-size:12.2px;color:#5f6368;transform:scaleX(0.9773);">Суммировать</div>
<div class="t" style="left:42.00px;top:532.96px;font-size:12.2px;color:#5f6368;">по</div>
<div class="t" style="left:141.00px;top:518.86px;font-size:12.2px;color:#5f6368;transform:scaleX(1.0153);">Показывать</div>
<div class="t" style="left:141.00px;top:532.96px;font-size:12.2px;color:#5f6368;">как</div>
<div class="a" style="left:40.50px;top:550.80px;width:81.10px;height:26.80px;background:#ffffff;border:1px solid #dadce0;border-radius:4px;box-sizing:border-box;"></div>
<div class="t" style="left:49.20px;top:554.63px;font-size:14px;color:#3c4043;transform:scaleX(0.8743);">SUM</div>
<svg class="a" style="left:103.09999999999991px;top:561.7px;" width="9" height="5" viewBox="0 0 9 5"><path d="M0 0 H9 L4.5 5 Z" fill="#444746"/></svg>
<div class="a" style="left:139.40px;top:550.80px;width:80.60px;height:26.80px;background:#ffffff;border:1px solid #dadce0;border-radius:4px;box-sizing:border-box;"></div>
<div class="t" style="left:148.80px;top:554.63px;font-size:14px;color:#3c4043;transform:scaleX(0.8845);">По умо...</div>
<svg class="a" style="left:205px;top:561.7px;" width="9" height="5" viewBox="0 0 9 5"><path d="M0 0 H9 L4.5 5 Z" fill="#444746"/></svg>
</div>
<svg class="a" style="left:1238.25px;top:139.25px;" width="11.5" height="11.5" viewBox="0 0 11.5 11.5"><path d="M0.5 0.5 L11.0 11.0 M11.0 0.5 L0.5 11.0" stroke="#444746" stroke-width="1.6"/></svg>
<svg class="a" style="left:1237.85px;top:346.25px;" width="11.5" height="11.5" viewBox="0 0 11.5 11.5"><path d="M0.5 0.5 L11.0 11.0 M11.0 0.5 L0.5 11.0" stroke="#444746" stroke-width="1.6"/></svg>
<svg class="a" style="left:1238.05px;top:616.65px;" width="11.5" height="11.5" viewBox="0 0 11.5 11.5"><path d="M0.5 0.5 L11.0 11.0 M11.0 0.5 L0.5 11.0" stroke="#444746" stroke-width="1.6"/></svg>
<div class="a" style="left:1031px;top:717px;width:509px;height:39px;background:#f9fbfd;"></div>
<svg class="a" style="left:1441.7px;top:730.4px;" width="15.5" height="16.5" viewBox="0 0 15.5 16.5"><path d="M0 1.5 Q0 0 1.5 0 H14 Q15.5 0 15.5 1.5 V12.5 Q15.5 14 14 14 H10 L7.75 16.5 L5.5 14 H1.5 Q0 14 0 12.5 Z" fill="#444746"/><path d="M7.75 2.5 L9 6 L12.5 7.2 L9 8.4 L7.75 12 L6.5 8.4 L3 7.2 L6.5 6 Z" fill="#f9fbfd"/></svg>
<svg class="a" style="left:1507.5px;top:733.8px;" width="7" height="11.7" viewBox="0 0 7 11.7"><path d="M6 1 L1.2 5.85 L6 10.7" fill="none" stroke="#444746" stroke-width="1.8"/></svg>
<div class="a" style="left:0px;top:0px;width:1540px;height:150px;background:rgba(48,48,48,0.71);z-index:50;"></div>
<div class="a" style="left:423px;top:150px;width:1117px;height:606px;background:rgba(48,48,48,0.71);z-index:50;"></div>
</body></html>
